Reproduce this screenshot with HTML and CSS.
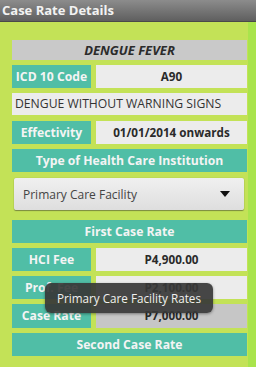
FILE: index.html
```html
<!DOCTYPE html>
<html>
<head>
<meta charset="utf-8">
<link rel="stylesheet" href="styles.css">
</head>
<body>
<div class="titlebar">Case Rate Details</div>
<div class="page">
  <div class="content">
    <div class="disease">DENGUE FEVER</div>
    <div class="row">
      <div class="label">ICD 10 Code</div>
      <div class="value">A90</div>
    </div>
    <div class="desc">DENGUE WITHOUT WARNING SIGNS</div>
    <div class="row">
      <div class="label">Effectivity</div>
      <div class="value">01/01/2014 onwards</div>
    </div>
    <div class="section">Type of Health Care Institution</div>
    <div class="spinner">
      <span>Primary Care Facility</span>
      <svg class="arrow" width="10" height="6" viewBox="0 0 10 6"><path d="M0 0H10L5 6Z" fill="#111"/></svg>
    </div>
    <div class="section first">First Case Rate</div>
    <div class="row">
      <div class="label">HCI Fee</div>
      <div class="value">P4,900.00</div>
    </div>
    <div class="row">
      <div class="label">Prof. Fee</div>
      <div class="value">P2,100.00</div>
    </div>
    <div class="row tall">
      <div class="label">Case Rate</div>
      <div class="value total">P7,000.00</div>
    </div>
    <div class="section">Second Case Rate</div>
  </div>
  <div class="strip"></div>
</div>
<div class="toast">Primary Care Facility Rates</div>
</body>
</html>
```
FILE: styles.css
```css
html, body {
  margin: 0;
  padding: 0;
}
body {
  width: 256px;
  height: 367px;
  overflow: hidden;
  background: #c3e257;
  font-family: "Open Sans", "DejaVu Sans", sans-serif;
  position: relative;
}
.titlebar {
  height: 21px;
  border-bottom: 1px solid #4a4a4a;
  background: linear-gradient(#8c8c8c, #5f5f5f);
  color: #f2f2f2;
  font-weight: bold;
  font-size: 13px;
  line-height: 21px;
  padding-left: 2px;
}
.page {
  display: flex;
  height: 345px;
}
.content {
  width: 235px;
  margin-left: 12px;
  padding-top: 18px;
  display: flex;
  flex-direction: column;
}
.strip {
  margin-left: 1px;
  flex: 1;
  background: #a9e44c;
}
.disease {
  height: 20px;
  background: #c9c9c9;
  color: #2b2b2b;
  font-weight: bold;
  font-style: italic;
  font-size: 13px;
  line-height: 20px;
  text-align: center;
  margin-bottom: 5px;
}
.row {
  display: flex;
  height: 23px;
  margin-bottom: 5px;
  gap: 5px;
}
.row.tall {
  height: 24px;
}
.label {
  width: 79px;
  background: #50bea6;
  color: #f4f4f4;
  font-weight: bold;
  font-size: 12.2px;
  line-height: 23px;
  text-align: center;
  white-space: nowrap;
  overflow: hidden;
}
.value {
  flex: 1;
  background: #ececec;
  color: #2a2a2a;
  font-weight: bold;
  font-size: 11.7px;
  line-height: 23px;
  text-align: center;
}
.value.total {
  background: #c6c6c6;
}
.desc {
  height: 22px;
  background: #ececec;
  color: #333;
  font-size: 12.2px;
  line-height: 22px;
  padding-left: 3px;
  margin-bottom: 6px;
  white-space: nowrap;
}
.section {
  height: 23px;
  background: #50bea6;
  color: #f4f4f4;
  font-weight: bold;
  font-size: 12.2px;
  line-height: 23px;
  text-align: center;
  margin-bottom: 6px;
}
.spinner {
  height: 32px;
  margin: 0 3px 10px 2px;
  background: linear-gradient(#f0f0f0, #dedede);
  border-radius: 2px;
  box-shadow: 0 1px 1px #7a8a40, 0 0 1px #8a9a50;
  display: flex;
  align-items: center;
  justify-content: space-between;
  padding: 0 14px 0 9px;
  color: #444;
  font-size: 12px;
}
.section.first {
  margin-bottom: 5px;
}
.toast {
  position: absolute;
  left: 45px;
  top: 283px;
  width: 168px;
  height: 30px;
  border-radius: 6px;
  background: rgba(55, 55, 55, 0.92);
  color: #f0f0f0;
  font-size: 11.7px;
  line-height: 30px;
  text-align: center;
  box-shadow: 0 1px 3px rgba(0,0,0,0.4);
}
```
